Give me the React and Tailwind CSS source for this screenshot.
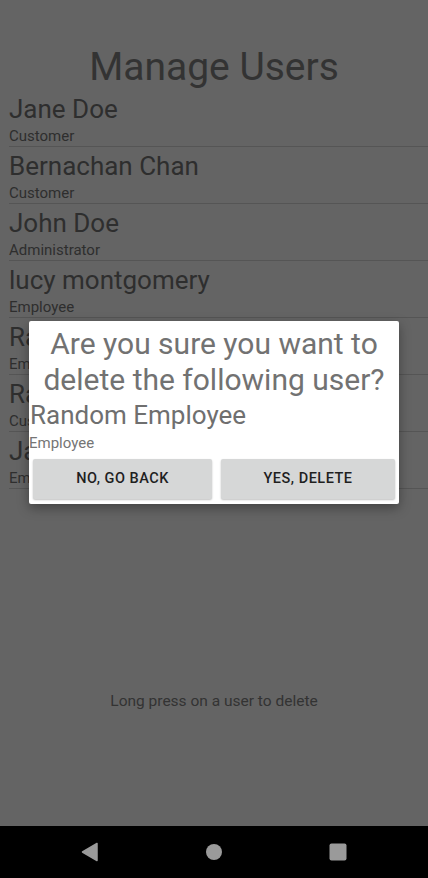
import React from 'react';

const users = [
  { name: 'Jane Doe', role: 'Customer' },
  { name: 'Bernachan Chan', role: 'Customer' },
  { name: 'John Doe', role: 'Administrator' },
  { name: 'lucy montgomery', role: 'Employee' },
  { name: 'Random Employee', role: 'Employee' },
  { name: 'Random Customer', role: 'Customer' },
  { name: 'Jack Employee', role: 'Employee' },
];

function UserRow({ user }) {
  return (
    <div className="ml-[9px] pt-[5px] pb-[2px] border-b border-[#555555]">
      <div className="text-[26px] leading-[28px] text-[#2e2e2e]">{user.name}</div>
      <div className="mt-[5px] text-[15px] leading-[16px] text-[#2e2e2e]">{user.role}</div>
    </div>
  );
}

function NavBar() {
  return (
    <div className="h-[52px] bg-black flex items-center justify-center gap-[106px]">
      <svg width="18" height="20" viewBox="0 0 18 20">
        <path d="M16 1.5 L16 18.5 L1.5 10 Z" fill="#9a9a9a" stroke="#9a9a9a" strokeWidth="1.5" strokeLinejoin="round" />
      </svg>
      <svg width="18" height="18" viewBox="0 0 18 18">
        <circle cx="9" cy="9" r="8" fill="#9a9a9a" />
      </svg>
      <svg width="18" height="18" viewBox="0 0 18 18">
        <rect x="0.5" y="0.5" width="17" height="17" rx="2" fill="#9a9a9a" />
      </svg>
    </div>
  );
}

export default function App() {
  return (
    <div className="h-[878px] w-[428px] flex flex-col overflow-hidden" style={{ fontFamily: 'Roboto, "Noto Sans", sans-serif' }}>
      <div className="flex-1 bg-[#646464] relative">
        <h1 className="pt-[45px] text-center text-[39px] leading-[45px] text-[#333333]">Manage Users</h1>
        <div>
          {users.map((u, i) => (
            <UserRow key={i} user={u} />
          ))}
        </div>
        <p className="mt-[203px] text-center text-[15.5px] leading-[18px] text-[#333333]">
          Long press on a user to delete
        </p>

        {/* Delete confirmation dialog */}
        <div className="absolute left-[29px] top-[321px] w-[370px] h-[183px] bg-white rounded-[2px] shadow-[0_4px_12px_rgba(0,0,0,0.35)] flex flex-col">
          <div className="pt-[5px] text-center text-[30px] leading-[36px] text-[#727272] whitespace-nowrap">
            Are you sure you want to
            <br />
            delete the following user?
          </div>
          <div className="mt-[3px] pl-[1px] text-[26px] leading-[28px] text-[#6f6f6f]">Random Employee</div>
          <div className="mt-[6px] text-[15px] leading-[16px] text-[#757575]">Employee</div>
          <div className="mt-[8px] flex gap-[9px] px-[4px]">
            <button className="w-[179px] h-[40px] bg-[#d6d7d7] rounded-[2px] shadow-[0_1px_2px_rgba(0,0,0,0.25)] text-[14.5px] font-medium tracking-[0.5px] text-[#1f1f1f]">
              NO, GO BACK
            </button>
            <button className="flex-1 h-[40px] bg-[#d6d7d7] rounded-[2px] shadow-[0_1px_2px_rgba(0,0,0,0.25)] text-[14.5px] font-medium tracking-[0.5px] text-[#1f1f1f]">
              YES, DELETE
            </button>
          </div>
        </div>
      </div>
      <NavBar />
    </div>
  );
}
